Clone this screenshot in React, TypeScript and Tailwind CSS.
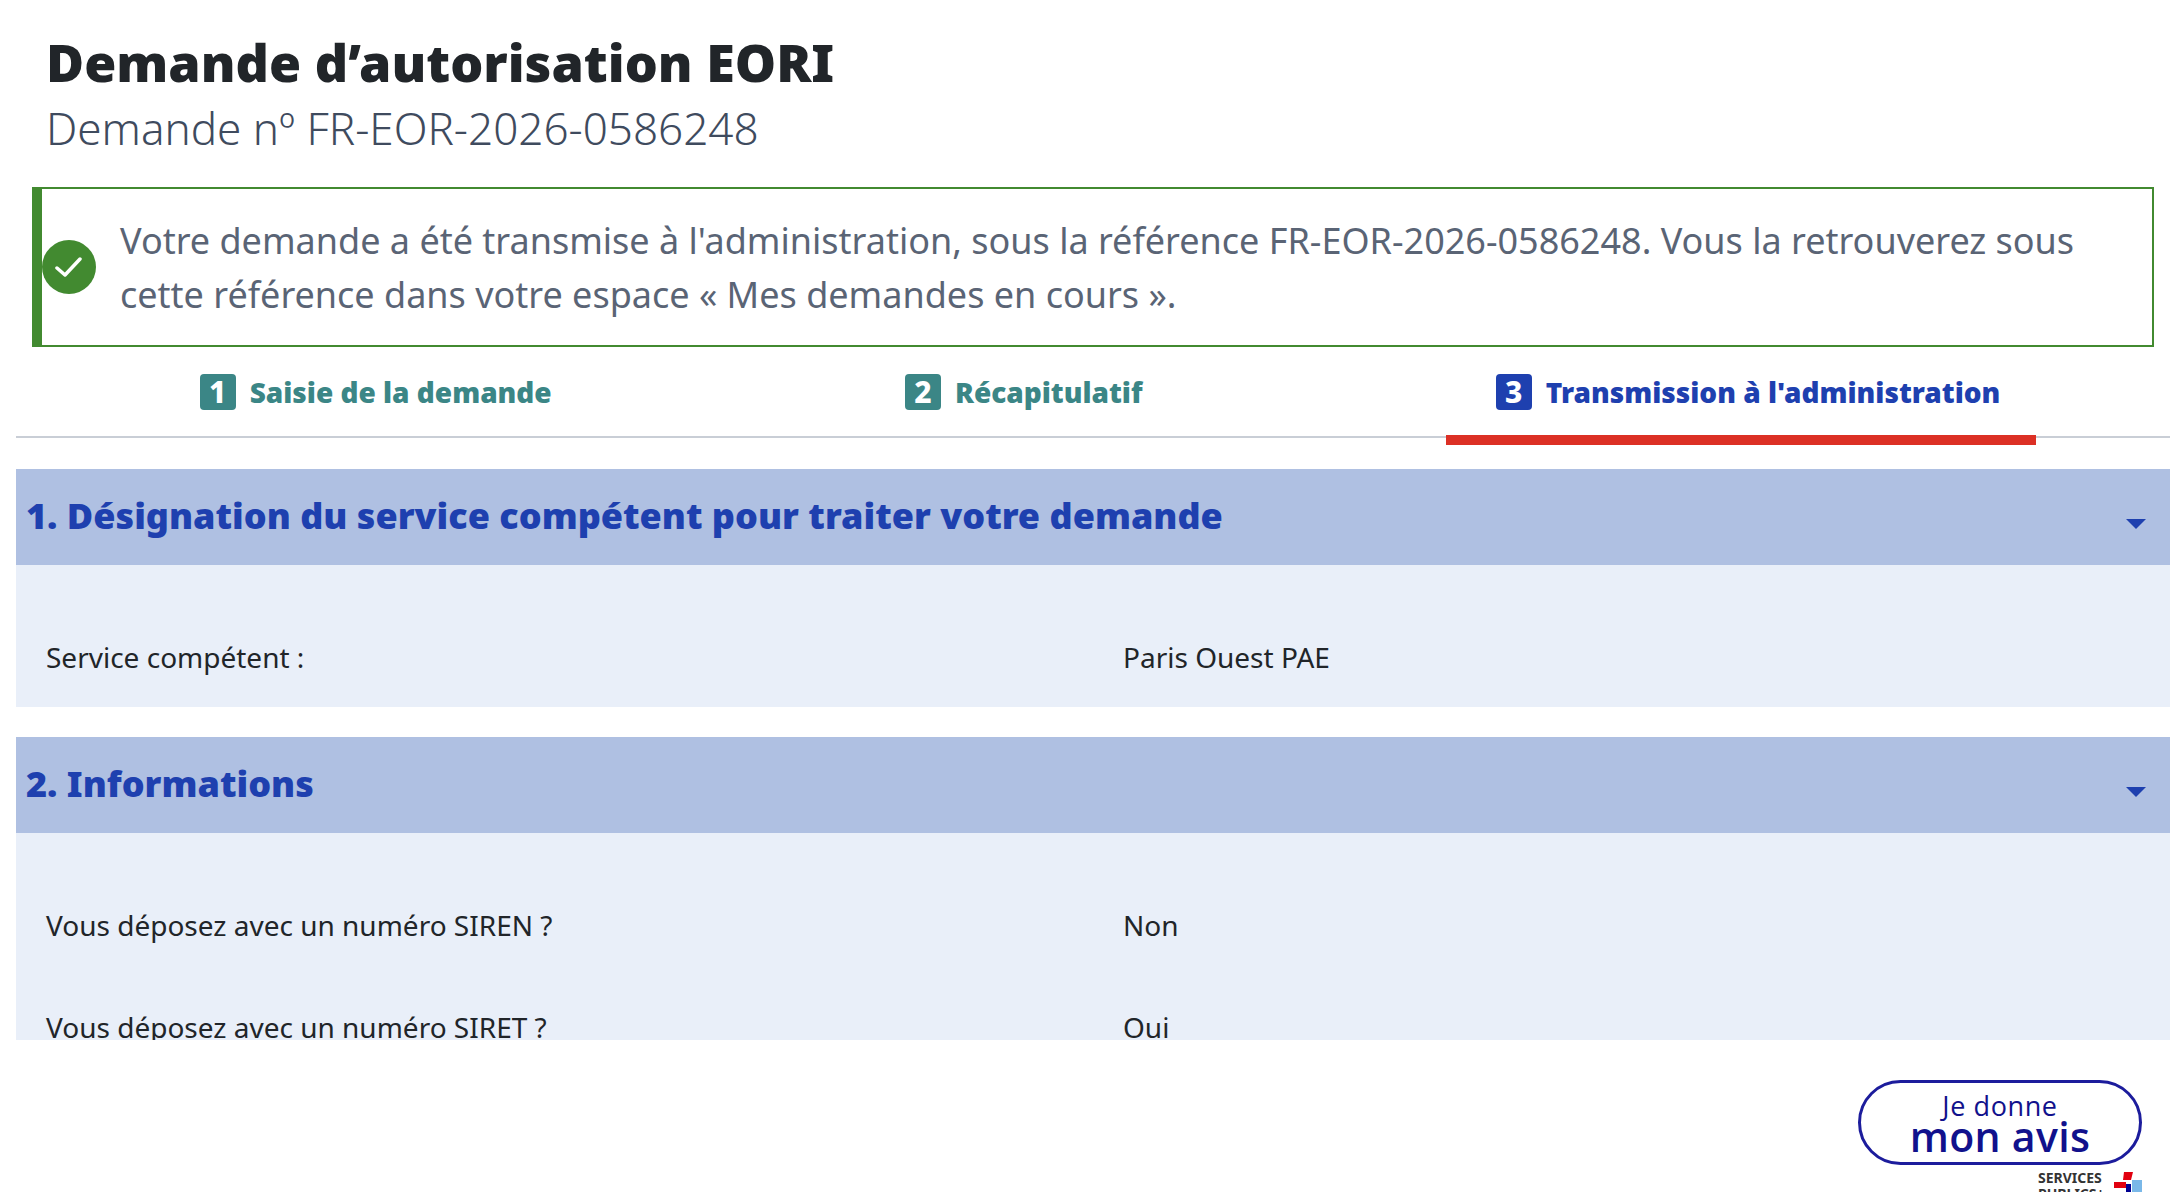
const font = "[font-family:'Noto_Sans',sans-serif]";

const Step = ({ n, label, active }: { n: string; label: string; active?: boolean }) => (
  <div className={`relative flex h-[89px] items-center gap-[14px] pl-[50px] pr-[36px] ${active ? "text-[#1e40af]" : "text-[#3b8686]"}`}>
    <span className={`flex h-[36px] w-[36px] items-center justify-center rounded-[4px] text-[30px] font-extrabold leading-none text-white ${active ? "bg-[#1e40af]" : "bg-[#3b8686]"}`}>
      {n}
    </span>
    <span className="text-[28px] font-black leading-none">{label}</span>
    {active && <div className="absolute inset-x-0 bottom-[-9px] h-[10px] bg-[#dc3025]" />}
  </div>
);

const SectionHead = ({ title }: { title: string }) => (
  <div className="flex h-[96px] items-center justify-between bg-[#afc0e2] pb-[2px] pl-[10px] pr-[24px]">
    <h2 className="text-[36px] font-black leading-none text-[#1e40af]">{title}</h2>
    <svg width="20" height="10" viewBox="0 0 20 10" className="mt-[16px]">
      <path d="M0 0h20L10 10z" fill="#1e40af" />
    </svg>
  </div>
);

const Row = ({ label, value }: { label: string; value: string }) => (
  <div className="grid grid-cols-[1077px_1fr] pl-[30px] text-[28px] leading-[38px] text-[#212529]">
    <span>{label}</span>
    <span>{value}</span>
  </div>
);

export default function App() {
  return (
    <div className={`flex h-[1192px] w-[2176px] flex-col overflow-hidden bg-white ${font}`}>
      <div className="h-[1040px] shrink-0 overflow-hidden pl-[16px] pr-[6px]">
        <div className="pl-[30px] pt-[30px]">
          <h1 className="text-[52px] font-black leading-[64px] text-[#212529]">Demande d’autorisation EORI</h1>
          <p className="mt-[4px] text-[44px] font-light leading-[60px] text-[#3f4b5e]">Demande nº FR-EOR-2026-0586248</p>
        </div>

        <div className="ml-[16px] mr-[16px] mt-[29px] flex h-[160px] items-center border-2 border-l-[10px] border-[#428a30]">
          <span className="flex h-[54px] w-[54px] shrink-0 items-center justify-center rounded-full bg-[#428a30]">
            <svg width="28" height="22" viewBox="0 0 28 22" fill="none" stroke="#fff" strokeWidth="3.5" strokeLinecap="round" strokeLinejoin="round">
              <path d="M2 12l8 7L25 3" />
            </svg>
          </span>
          <p className="ml-[24px] mr-[40px] pt-[1px] text-[36px] leading-[54px] text-[#5a6475]">
            Votre demande a été transmise à l'administration, sous la référence FR-EOR-2026-0586248. Vous la retrouverez sous cette référence dans votre espace « Mes demandes en cours ».
          </p>
        </div>

        <div className="flex h-[91px] justify-around border-b-2 border-[#c9ced6]">
          <Step n="1" label="Saisie de la demande" />
          <Step n="2" label="Récapitulatif" />
          <Step n="3" label="Transmission à l'administration" active />
        </div>

        <section className="mt-[31px]">
          <SectionHead title="1. Désignation du service compétent pour traiter votre demande" />
          <div className="h-[142px] bg-[#e9eff9] pt-[73px]">
            <Row label="Service compétent :" value="Paris Ouest PAE" />
          </div>
        </section>

        <section className="mt-[30px]">
          <SectionHead title="2. Informations" />
          <div className="flex flex-col gap-[64px] bg-[#e9eff9] pb-[60px] pt-[73px]">
            <Row label="Vous déposez avec un numéro SIREN ?" value="Non" />
            <Row label="Vous déposez avec un numéro SIRET ?" value="Oui" />
          </div>
        </section>
      </div>

      <footer className="relative flex-1 overflow-hidden">
        <div className="absolute left-[1858px] top-[40px] flex h-[85px] w-[284px] flex-col items-center justify-center rounded-full border-[3px] border-[#1c1c9c] text-[#11118c]">
          <span className="text-[27px] font-medium leading-[26px] tracking-[0.6px] [font-family:'Open_Sans',sans-serif]">Je donne</span>
          <span className="text-[41px] font-semibold leading-[34px] tracking-[0.3px] [font-family:'Open_Sans',sans-serif]">mon avis</span>
        </div>
        <div className="absolute left-[2038px] top-[130px] text-[14px] font-bold leading-[16px] text-[#333]">
          SERVICES<br />PUBLICS+
        </div>
        <svg width="28" height="24" viewBox="0 0 28 24" className="absolute left-[2114px] top-[132px]">
          <path d="M10 0h9l-2 8h-8z" fill="#e1000f" />
          <path d="M0 10h12v6H0z" fill="#e1000f" />
          <path d="M12 12h5v12h-5z" fill="#000091" />
          <path d="M18 8h10v12H18z" fill="#7ab8e8" />
        </svg>
      </footer>
    </div>
  );
}
